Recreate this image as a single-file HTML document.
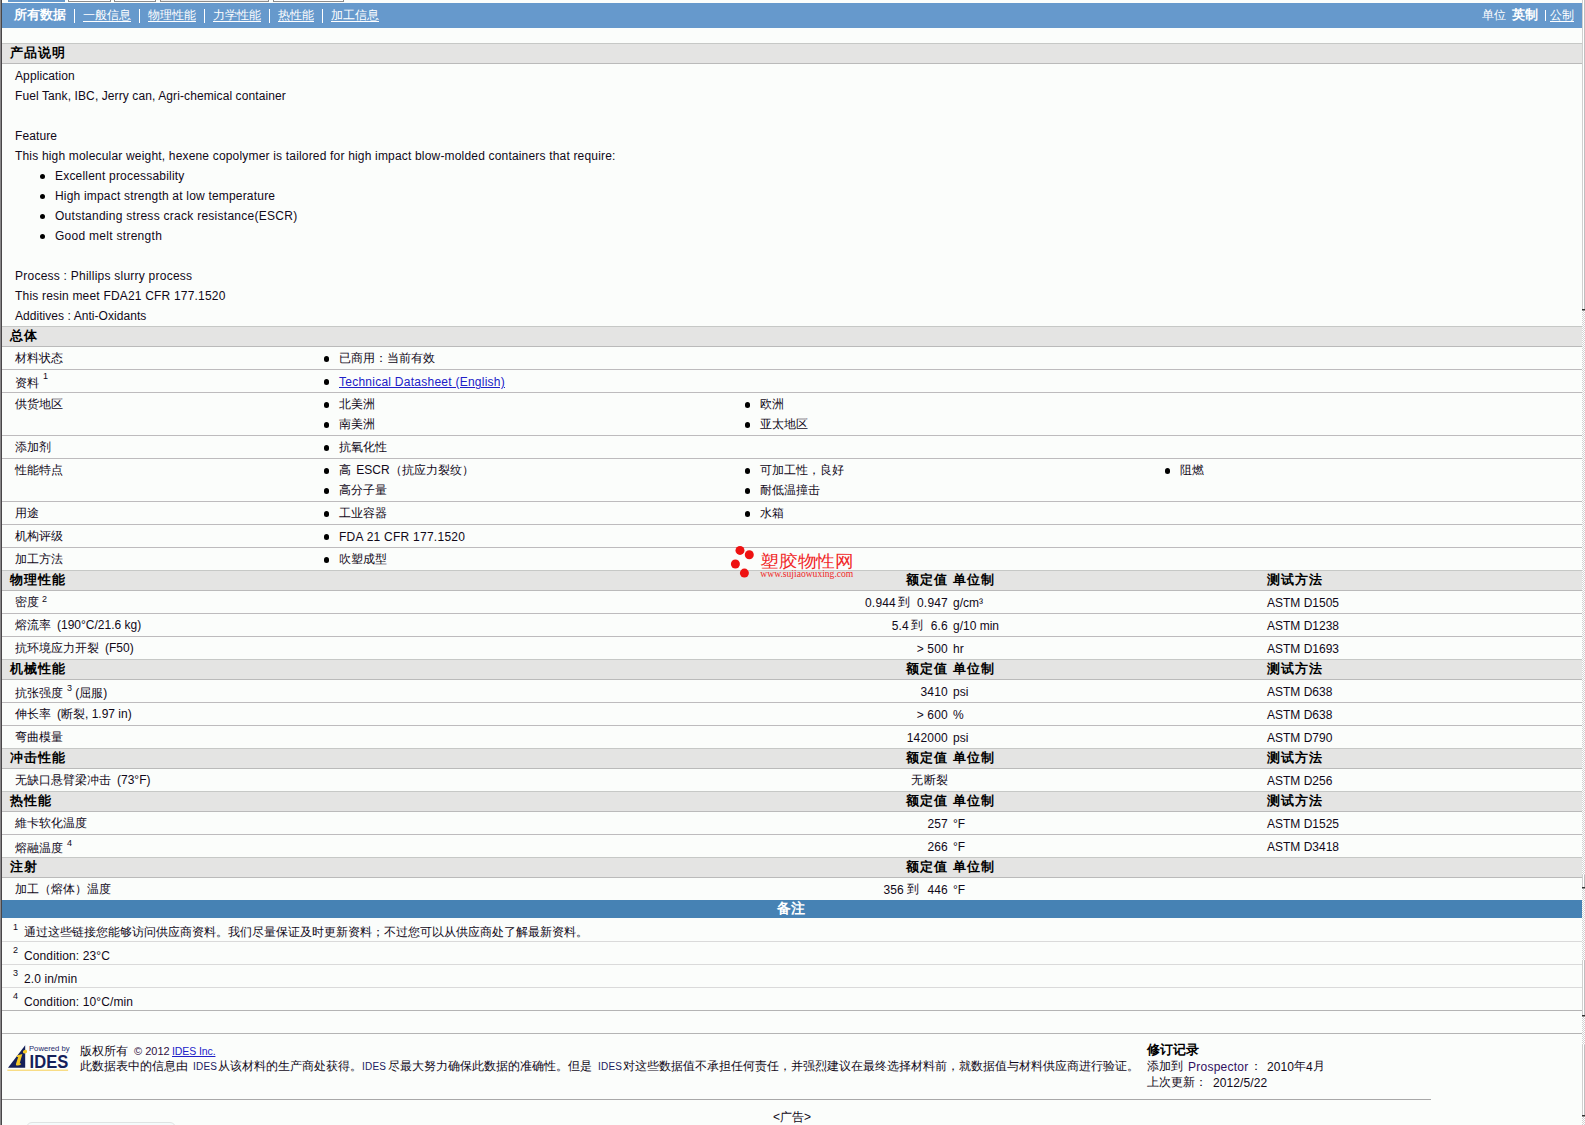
<!DOCTYPE html>
<html><head><meta charset="utf-8"><title>datasheet</title>
<style>
html,body{margin:0;padding:0;}
body{width:1585px;height:1125px;overflow:hidden;position:relative;background:#fbfdfb;font-family:"Liberation Sans",sans-serif;font-size:12px;color:#100818;}
.t{position:absolute;white-space:pre;}
</style></head><body>
<div style="position:absolute;left:0px;top:0px;width:1px;height:1125px;background:#898789;"></div>
<div style="position:absolute;left:1px;top:0px;width:1px;height:1125px;background:#484648;"></div>
<div style="position:absolute;left:1582px;top:0px;width:1px;height:309px;background:#cfcfcf;"></div>
<div style="position:absolute;left:1583px;top:0px;width:1px;height:309px;background:#ffffff;"></div>
<div style="position:absolute;left:1584px;top:0px;width:1px;height:309px;background:#bfbfbf;"></div>
<div style="position:absolute;left:1582px;top:875px;width:1px;height:12px;background:#cfcfcf;"></div>
<div style="position:absolute;left:1583px;top:875px;width:1px;height:12px;background:#ffffff;"></div>
<div style="position:absolute;left:1584px;top:875px;width:1px;height:12px;background:#bfbfbf;"></div>
<div style="position:absolute;left:1582px;top:960px;width:1px;height:55px;background:#cfcfcf;"></div>
<div style="position:absolute;left:1583px;top:960px;width:1px;height:55px;background:#ffffff;"></div>
<div style="position:absolute;left:1584px;top:960px;width:1px;height:55px;background:#bfbfbf;"></div>
<div style="position:absolute;left:1582px;top:1045px;width:1px;height:70px;background:#cfcfcf;"></div>
<div style="position:absolute;left:1583px;top:1045px;width:1px;height:70px;background:#ffffff;"></div>
<div style="position:absolute;left:1584px;top:1045px;width:1px;height:70px;background:#bfbfbf;"></div>
<div style="position:absolute;left:1582px;top:311px;width:3px;height:564px;background:repeating-conic-gradient(#d2d2d2 0 25%, #ffffff 0 50%) 0 0/2px 2px;"></div>
<div style="position:absolute;left:1582px;top:889px;width:3px;height:71px;background:repeating-conic-gradient(#d2d2d2 0 25%, #ffffff 0 50%) 0 0/2px 2px;"></div>
<div style="position:absolute;left:1582px;top:1017px;width:3px;height:28px;background:repeating-conic-gradient(#d2d2d2 0 25%, #ffffff 0 50%) 0 0/2px 2px;"></div>
<div style="position:absolute;left:1582px;top:1117px;width:3px;height:8px;background:repeating-conic-gradient(#d2d2d2 0 25%, #ffffff 0 50%) 0 0/2px 2px;"></div>
<div style="position:absolute;left:1582px;top:309px;width:3px;height:1px;background:#333333;"></div>
<div style="position:absolute;left:1582px;top:310px;width:3px;height:1px;background:#909090;"></div>
<div style="position:absolute;left:1582px;top:887px;width:3px;height:1px;background:#333333;"></div>
<div style="position:absolute;left:1582px;top:888px;width:3px;height:1px;background:#909090;"></div>
<div style="position:absolute;left:1582px;top:1015px;width:3px;height:1px;background:#333333;"></div>
<div style="position:absolute;left:1582px;top:1016px;width:3px;height:1px;background:#909090;"></div>
<div style="position:absolute;left:1582px;top:1115px;width:3px;height:1px;background:#333333;"></div>
<div style="position:absolute;left:1582px;top:1116px;width:3px;height:1px;background:#909090;"></div>
<div style="position:absolute;left:8px;top:0px;width:57px;height:2px;background:#6699cc;"></div>
<div style="position:absolute;left:68px;top:-2px;width:41px;height:2px;background:#ffffff;border:1px solid #8c8c8c;"></div>
<div style="position:absolute;left:114px;top:-2px;width:40px;height:2px;background:#ffffff;border:1px solid #8c8c8c;"></div>
<div style="position:absolute;left:160px;top:-2px;width:107px;height:2px;background:#eeeeee;border:1px solid #8c8c8c;"></div>
<div style="position:absolute;left:273px;top:-2px;width:69px;height:2px;background:#ffffff;border:1px solid #8c8c8c;"></div>
<div style="position:absolute;left:2px;top:3px;width:1580px;height:25px;background:#6699cc;"></div>
<div class="t" style="left:14px;top:8px;line-height:14px;font-size:13px;color:#ffffff;font-weight:bold;">所有数据</div>
<div style="position:absolute;left:74px;top:9px;width:1px;height:14px;background:#ffffff;"></div>
<div style="position:absolute;left:139px;top:9px;width:1px;height:14px;background:#ffffff;"></div>
<div style="position:absolute;left:204px;top:9px;width:1px;height:14px;background:#ffffff;"></div>
<div style="position:absolute;left:269px;top:9px;width:1px;height:14px;background:#ffffff;"></div>
<div style="position:absolute;left:322px;top:9px;width:1px;height:14px;background:#ffffff;"></div>
<div class="t" style="left:83px;top:8px;line-height:14px;font-size:12px;color:#ffffff;">一般信息</div>
<div style="position:absolute;left:83px;top:21px;width:48px;height:1px;background:#ffffff;"></div>
<div class="t" style="left:148px;top:8px;line-height:14px;font-size:12px;color:#ffffff;">物理性能</div>
<div style="position:absolute;left:148px;top:21px;width:48px;height:1px;background:#ffffff;"></div>
<div class="t" style="left:213px;top:8px;line-height:14px;font-size:12px;color:#ffffff;">力学性能</div>
<div style="position:absolute;left:213px;top:21px;width:48px;height:1px;background:#ffffff;"></div>
<div class="t" style="left:278px;top:8px;line-height:14px;font-size:12px;color:#ffffff;">热性能</div>
<div style="position:absolute;left:278px;top:21px;width:36px;height:1px;background:#ffffff;"></div>
<div class="t" style="left:331px;top:8px;line-height:14px;font-size:12px;color:#ffffff;">加工信息</div>
<div style="position:absolute;left:331px;top:21px;width:48px;height:1px;background:#ffffff;"></div>
<div class="t" style="left:1482px;top:8px;line-height:14px;font-size:12px;color:#ffffff;">单位</div>
<div class="t" style="left:1512px;top:8px;line-height:14px;font-size:13px;color:#ffffff;font-weight:bold;">英制</div>
<div style="position:absolute;left:1545px;top:10px;width:1px;height:11px;background:#ffffff;"></div>
<div class="t" style="left:1550px;top:8px;line-height:14px;font-size:12px;color:#ffffff;">公制</div>
<div style="position:absolute;left:1550px;top:21px;width:24px;height:1px;background:#ffffff;"></div>
<div style="position:absolute;left:2px;top:43px;width:1580px;height:1px;background:#c6c8c6;"></div>
<div style="position:absolute;left:2px;top:44px;width:1580px;height:19px;background:#e4e4e3;"></div>
<div style="position:absolute;left:2px;top:63px;width:1580px;height:1px;background:#bababa;"></div>
<div class="t" style="left:10px;top:46px;line-height:14px;font-size:13px;color:#000;font-weight:bold;letter-spacing:1px;">产品说明</div>
<div class="t" style="left:15px;top:69px;line-height:14px;font-size:12px;color:#100818;letter-spacing:0.1px;">Application</div>
<div class="t" style="left:15px;top:89px;line-height:14px;font-size:12px;color:#100818;letter-spacing:0.1px;">Fuel Tank, IBC, Jerry can, Agri-chemical container</div>
<div class="t" style="left:15px;top:129px;line-height:14px;font-size:12px;color:#100818;letter-spacing:0.1px;">Feature</div>
<div class="t" style="left:15px;top:149px;line-height:14px;font-size:12px;color:#100818;letter-spacing:0.18px;">This high molecular weight, hexene copolymer is tailored for high impact blow-molded containers that require:</div>
<div style="position:absolute;left:40.00px;top:173.80px;width:5.4px;height:5.4px;border-radius:50%;background:#000"></div>
<div class="t" style="left:55px;top:169px;line-height:14px;font-size:12px;color:#100818;letter-spacing:0.2px;">Excellent processability</div>
<div style="position:absolute;left:40.00px;top:193.80px;width:5.4px;height:5.4px;border-radius:50%;background:#000"></div>
<div class="t" style="left:55px;top:189px;line-height:14px;font-size:12px;color:#100818;letter-spacing:0.19px;">High impact strength at low temperature</div>
<div style="position:absolute;left:40.00px;top:213.80px;width:5.4px;height:5.4px;border-radius:50%;background:#000"></div>
<div class="t" style="left:55px;top:209px;line-height:14px;font-size:12px;color:#100818;letter-spacing:0.27px;">Outstanding stress crack resistance(ESCR)</div>
<div style="position:absolute;left:40.00px;top:233.80px;width:5.4px;height:5.4px;border-radius:50%;background:#000"></div>
<div class="t" style="left:55px;top:229px;line-height:14px;font-size:12px;color:#100818;letter-spacing:0.28px;">Good melt strength</div>
<div class="t" style="left:15px;top:269px;line-height:14px;font-size:12px;color:#100818;letter-spacing:0.24px;">Process : Phillips slurry process</div>
<div class="t" style="left:15px;top:289px;line-height:14px;font-size:12px;color:#100818;letter-spacing:0.19px;">This resin meet FDA21 CFR 177.1520</div>
<div class="t" style="left:15px;top:309px;line-height:14px;font-size:12px;color:#100818;letter-spacing:0.05px;">Additives : Anti-Oxidants</div>
<div style="position:absolute;left:2px;top:326px;width:1580px;height:1px;background:#c6c8c6;"></div>
<div style="position:absolute;left:2px;top:327px;width:1580px;height:19px;background:#e4e4e3;"></div>
<div style="position:absolute;left:2px;top:346px;width:1580px;height:1px;background:#bababa;"></div>
<div class="t" style="left:10px;top:329px;line-height:14px;font-size:13px;color:#000;font-weight:bold;letter-spacing:1px;">总体</div>
<div class="t" style="left:15px;top:351px;line-height:14px;font-size:12px;color:#100818;">材料状态</div>
<div style="position:absolute;left:324.00px;top:356.30px;width:5.4px;height:5.4px;border-radius:50%;background:#000"></div>
<div class="t" style="left:339px;top:351px;line-height:14px;font-size:12px;color:#100818;">已商用：当前有效</div>
<div style="position:absolute;left:2px;top:369px;width:1580px;height:1px;background:#bdbbbd;"></div>
<div class="t" style="left:15px;top:376px;line-height:14px;font-size:12px;color:#100818;">资料</div>
<div style="position:absolute;left:324.00px;top:379.30px;width:5.4px;height:5.4px;border-radius:50%;background:#000"></div>
<div class="t" style="left:339px;top:375px;line-height:14px;font-size:12px;color:#100818;letter-spacing:0.25px;"><span style="color:#2020c8;text-decoration:underline">Technical Datasheet (English)</span></div>
<div style="position:absolute;left:2px;top:392px;width:1580px;height:1px;background:#bdbbbd;"></div>
<div class="t" style="left:15px;top:397px;line-height:14px;font-size:12px;color:#100818;">供货地区</div>
<div style="position:absolute;left:324.00px;top:402.30px;width:5.4px;height:5.4px;border-radius:50%;background:#000"></div>
<div class="t" style="left:339px;top:397px;line-height:14px;font-size:12px;color:#100818;">北美洲</div>
<div style="position:absolute;left:324.00px;top:422.30px;width:5.4px;height:5.4px;border-radius:50%;background:#000"></div>
<div class="t" style="left:339px;top:417px;line-height:14px;font-size:12px;color:#100818;">南美洲</div>
<div style="position:absolute;left:745.00px;top:402.30px;width:5.4px;height:5.4px;border-radius:50%;background:#000"></div>
<div class="t" style="left:760px;top:397px;line-height:14px;font-size:12px;color:#100818;">欧洲</div>
<div style="position:absolute;left:745.00px;top:422.30px;width:5.4px;height:5.4px;border-radius:50%;background:#000"></div>
<div class="t" style="left:760px;top:417px;line-height:14px;font-size:12px;color:#100818;">亚太地区</div>
<div style="position:absolute;left:2px;top:435px;width:1580px;height:1px;background:#bdbbbd;"></div>
<div class="t" style="left:15px;top:440px;line-height:14px;font-size:12px;color:#100818;">添加剂</div>
<div style="position:absolute;left:324.00px;top:445.30px;width:5.4px;height:5.4px;border-radius:50%;background:#000"></div>
<div class="t" style="left:339px;top:440px;line-height:14px;font-size:12px;color:#100818;">抗氧化性</div>
<div style="position:absolute;left:2px;top:458px;width:1580px;height:1px;background:#bdbbbd;"></div>
<div class="t" style="left:15px;top:463px;line-height:14px;font-size:12px;color:#100818;">性能特点</div>
<div style="position:absolute;left:324.00px;top:468.30px;width:5.4px;height:5.4px;border-radius:50%;background:#000"></div>
<div class="t" style="left:339px;top:463px;line-height:14px;font-size:12px;color:#100818;">高 <span style="margin-left:2px">ESCR</span>（抗应力裂纹）</div>
<div style="position:absolute;left:324.00px;top:488.30px;width:5.4px;height:5.4px;border-radius:50%;background:#000"></div>
<div class="t" style="left:339px;top:483px;line-height:14px;font-size:12px;color:#100818;">高分子量</div>
<div style="position:absolute;left:745.00px;top:468.30px;width:5.4px;height:5.4px;border-radius:50%;background:#000"></div>
<div class="t" style="left:760px;top:463px;line-height:14px;font-size:12px;color:#100818;">可加工性，良好</div>
<div style="position:absolute;left:745.00px;top:488.30px;width:5.4px;height:5.4px;border-radius:50%;background:#000"></div>
<div class="t" style="left:760px;top:483px;line-height:14px;font-size:12px;color:#100818;">耐低温撞击</div>
<div style="position:absolute;left:1165.00px;top:468.30px;width:5.4px;height:5.4px;border-radius:50%;background:#000"></div>
<div class="t" style="left:1180px;top:463px;line-height:14px;font-size:12px;color:#100818;">阻燃</div>
<div style="position:absolute;left:2px;top:501px;width:1580px;height:1px;background:#bdbbbd;"></div>
<div class="t" style="left:15px;top:506px;line-height:14px;font-size:12px;color:#100818;">用途</div>
<div style="position:absolute;left:324.00px;top:511.30px;width:5.4px;height:5.4px;border-radius:50%;background:#000"></div>
<div class="t" style="left:339px;top:506px;line-height:14px;font-size:12px;color:#100818;">工业容器</div>
<div style="position:absolute;left:745.00px;top:511.30px;width:5.4px;height:5.4px;border-radius:50%;background:#000"></div>
<div class="t" style="left:760px;top:506px;line-height:14px;font-size:12px;color:#100818;">水箱</div>
<div style="position:absolute;left:2px;top:524px;width:1580px;height:1px;background:#bdbbbd;"></div>
<div class="t" style="left:15px;top:529px;line-height:14px;font-size:12px;color:#100818;">机构评级</div>
<div style="position:absolute;left:324.00px;top:534.30px;width:5.4px;height:5.4px;border-radius:50%;background:#000"></div>
<div class="t" style="left:339px;top:530px;line-height:14px;font-size:12px;color:#100818;letter-spacing:0.25px;">FDA 21 CFR 177.1520</div>
<div style="position:absolute;left:2px;top:547px;width:1580px;height:1px;background:#bdbbbd;"></div>
<div class="t" style="left:15px;top:552px;line-height:14px;font-size:12px;color:#100818;">加工方法</div>
<div style="position:absolute;left:324.00px;top:557.30px;width:5.4px;height:5.4px;border-radius:50%;background:#000"></div>
<div class="t" style="left:339px;top:552px;line-height:14px;font-size:12px;color:#100818;">吹塑成型</div>
<div class="t" style="left:43px;top:369px;line-height:14px;font-size:9px;color:#100818;">1</div>
<div style="position:absolute;left:2px;top:570px;width:1580px;height:1px;background:#c6c8c6;"></div>
<div style="position:absolute;left:2px;top:571px;width:1580px;height:19px;background:#e4e4e3;"></div>
<div style="position:absolute;left:2px;top:590px;width:1580px;height:1px;background:#bababa;"></div>
<div class="t" style="left:10px;top:573px;line-height:14px;font-size:13px;color:#000;font-weight:bold;letter-spacing:1px;">物理性能</div>
<div class="t" style="left:648px;width:300px;text-align:right;top:573px;line-height:14px;font-size:13px;color:#000;font-weight:bold;letter-spacing:1px;">额定值</div>
<div class="t" style="left:953px;top:573px;line-height:14px;font-size:13px;color:#000;font-weight:bold;letter-spacing:1px;">单位制</div>
<div class="t" style="left:1267px;top:573px;line-height:14px;font-size:13px;color:#000;font-weight:bold;letter-spacing:1px;">测试方法</div>
<div class="t" style="left:15px;top:595px;line-height:14px;font-size:12px;color:#100818;">密度</div>
<div class="t" style="left:42px;top:592px;line-height:14px;font-size:9px;color:#100818;">2</div>
<div class="t" style="left:596px;width:300px;text-align:right;top:596px;line-height:14px;font-size:12px;color:#100818;letter-spacing:0.2px;">0.944</div>
<div class="t" style="left:898px;top:595px;line-height:14px;font-size:12px;color:#100818;letter-spacing:0.2px;">到</div>
<div class="t" style="left:648px;width:300px;text-align:right;top:596px;line-height:14px;font-size:12px;color:#100818;letter-spacing:0.2px;">0.947</div>
<div class="t" style="left:953px;top:596px;line-height:14px;font-size:12px;color:#100818;">g/cm³</div>
<div class="t" style="left:1267px;top:596px;line-height:14px;font-size:12px;color:#100818;">ASTM D1505</div>
<div style="position:absolute;left:2px;top:613px;width:1580px;height:1px;background:#bdbbbd;"></div>
<div class="t" style="left:15px;top:618px;line-height:14px;font-size:12px;color:#100818;">熔流率<span style="margin-left:6px"></span>(190°C/21.6 kg)</div>
<div class="t" style="left:609px;width:300px;text-align:right;top:619px;line-height:14px;font-size:12px;color:#100818;letter-spacing:0.2px;">5.4</div>
<div class="t" style="left:911px;top:618px;line-height:14px;font-size:12px;color:#100818;letter-spacing:0.2px;">到</div>
<div class="t" style="left:648px;width:300px;text-align:right;top:619px;line-height:14px;font-size:12px;color:#100818;letter-spacing:0.2px;">6.6</div>
<div class="t" style="left:953px;top:619px;line-height:14px;font-size:12px;color:#100818;">g/10 min</div>
<div class="t" style="left:1267px;top:619px;line-height:14px;font-size:12px;color:#100818;">ASTM D1238</div>
<div style="position:absolute;left:2px;top:636px;width:1580px;height:1px;background:#bdbbbd;"></div>
<div class="t" style="left:15px;top:641px;line-height:14px;font-size:12px;color:#100818;">抗环境应力开裂<span style="margin-left:6px"></span>(F50)</div>
<div class="t" style="left:648px;width:300px;text-align:right;top:642px;line-height:14px;font-size:12px;color:#100818;letter-spacing:0.2px;">&gt; 500</div>
<div class="t" style="left:953px;top:642px;line-height:14px;font-size:12px;color:#100818;">hr</div>
<div class="t" style="left:1267px;top:642px;line-height:14px;font-size:12px;color:#100818;">ASTM D1693</div>
<div style="position:absolute;left:2px;top:659px;width:1580px;height:1px;background:#c6c8c6;"></div>
<div style="position:absolute;left:2px;top:660px;width:1580px;height:19px;background:#e4e4e3;"></div>
<div style="position:absolute;left:2px;top:679px;width:1580px;height:1px;background:#bababa;"></div>
<div class="t" style="left:10px;top:662px;line-height:14px;font-size:13px;color:#000;font-weight:bold;letter-spacing:1px;">机械性能</div>
<div class="t" style="left:648px;width:300px;text-align:right;top:662px;line-height:14px;font-size:13px;color:#000;font-weight:bold;letter-spacing:1px;">额定值</div>
<div class="t" style="left:953px;top:662px;line-height:14px;font-size:13px;color:#000;font-weight:bold;letter-spacing:1px;">单位制</div>
<div class="t" style="left:1267px;top:662px;line-height:14px;font-size:13px;color:#000;font-weight:bold;letter-spacing:1px;">测试方法</div>
<div class="t" style="left:15px;top:686px;line-height:14px;font-size:12px;color:#100818;">抗张强度<span style="position:relative;top:-6px;font-size:9px;margin-left:4px">3</span> (屈服)</div>
<div class="t" style="left:648px;width:300px;text-align:right;top:685px;line-height:14px;font-size:12px;color:#100818;letter-spacing:0.2px;">3410</div>
<div class="t" style="left:953px;top:685px;line-height:14px;font-size:12px;color:#100818;">psi</div>
<div class="t" style="left:1267px;top:685px;line-height:14px;font-size:12px;color:#100818;">ASTM D638</div>
<div style="position:absolute;left:2px;top:702px;width:1580px;height:1px;background:#bdbbbd;"></div>
<div class="t" style="left:15px;top:707px;line-height:14px;font-size:12px;color:#100818;">伸长率<span style="margin-left:6px"></span>(断裂, 1.97 in)</div>
<div class="t" style="left:648px;width:300px;text-align:right;top:708px;line-height:14px;font-size:12px;color:#100818;letter-spacing:0.2px;">&gt; 600</div>
<div class="t" style="left:953px;top:708px;line-height:14px;font-size:12px;color:#100818;">%</div>
<div class="t" style="left:1267px;top:708px;line-height:14px;font-size:12px;color:#100818;">ASTM D638</div>
<div style="position:absolute;left:2px;top:725px;width:1580px;height:1px;background:#bdbbbd;"></div>
<div class="t" style="left:15px;top:730px;line-height:14px;font-size:12px;color:#100818;">弯曲模量</div>
<div class="t" style="left:648px;width:300px;text-align:right;top:731px;line-height:14px;font-size:12px;color:#100818;letter-spacing:0.2px;">142000</div>
<div class="t" style="left:953px;top:731px;line-height:14px;font-size:12px;color:#100818;">psi</div>
<div class="t" style="left:1267px;top:731px;line-height:14px;font-size:12px;color:#100818;">ASTM D790</div>
<div style="position:absolute;left:2px;top:748px;width:1580px;height:1px;background:#c6c8c6;"></div>
<div style="position:absolute;left:2px;top:749px;width:1580px;height:19px;background:#e4e4e3;"></div>
<div style="position:absolute;left:2px;top:768px;width:1580px;height:1px;background:#bababa;"></div>
<div class="t" style="left:10px;top:751px;line-height:14px;font-size:13px;color:#000;font-weight:bold;letter-spacing:1px;">冲击性能</div>
<div class="t" style="left:648px;width:300px;text-align:right;top:751px;line-height:14px;font-size:13px;color:#000;font-weight:bold;letter-spacing:1px;">额定值</div>
<div class="t" style="left:953px;top:751px;line-height:14px;font-size:13px;color:#000;font-weight:bold;letter-spacing:1px;">单位制</div>
<div class="t" style="left:1267px;top:751px;line-height:14px;font-size:13px;color:#000;font-weight:bold;letter-spacing:1px;">测试方法</div>
<div class="t" style="left:15px;top:773px;line-height:14px;font-size:12px;color:#100818;">无缺口悬臂梁冲击<span style="margin-left:6px"></span>(73°F)</div>
<div class="t" style="left:648px;width:300px;text-align:right;top:773px;line-height:14px;font-size:12px;color:#100818;letter-spacing:0.2px;">无断裂</div>
<div class="t" style="left:1267px;top:774px;line-height:14px;font-size:12px;color:#100818;">ASTM D256</div>
<div style="position:absolute;left:2px;top:791px;width:1580px;height:1px;background:#c6c8c6;"></div>
<div style="position:absolute;left:2px;top:792px;width:1580px;height:19px;background:#e4e4e3;"></div>
<div style="position:absolute;left:2px;top:811px;width:1580px;height:1px;background:#bababa;"></div>
<div class="t" style="left:10px;top:794px;line-height:14px;font-size:13px;color:#000;font-weight:bold;letter-spacing:1px;">热性能</div>
<div class="t" style="left:648px;width:300px;text-align:right;top:794px;line-height:14px;font-size:13px;color:#000;font-weight:bold;letter-spacing:1px;">额定值</div>
<div class="t" style="left:953px;top:794px;line-height:14px;font-size:13px;color:#000;font-weight:bold;letter-spacing:1px;">单位制</div>
<div class="t" style="left:1267px;top:794px;line-height:14px;font-size:13px;color:#000;font-weight:bold;letter-spacing:1px;">测试方法</div>
<div class="t" style="left:15px;top:816px;line-height:14px;font-size:12px;color:#100818;">維卡软化温度</div>
<div class="t" style="left:648px;width:300px;text-align:right;top:817px;line-height:14px;font-size:12px;color:#100818;letter-spacing:0.2px;">257</div>
<div class="t" style="left:953px;top:817px;line-height:14px;font-size:12px;color:#100818;">°F</div>
<div class="t" style="left:1267px;top:817px;line-height:14px;font-size:12px;color:#100818;">ASTM D1525</div>
<div style="position:absolute;left:2px;top:834px;width:1580px;height:1px;background:#bdbbbd;"></div>
<div class="t" style="left:15px;top:841px;line-height:14px;font-size:12px;color:#100818;">熔融温度</div>
<div class="t" style="left:67px;top:836px;line-height:14px;font-size:9px;color:#100818;">4</div>
<div class="t" style="left:648px;width:300px;text-align:right;top:840px;line-height:14px;font-size:12px;color:#100818;letter-spacing:0.2px;">266</div>
<div class="t" style="left:953px;top:840px;line-height:14px;font-size:12px;color:#100818;">°F</div>
<div class="t" style="left:1267px;top:840px;line-height:14px;font-size:12px;color:#100818;">ASTM D3418</div>
<div style="position:absolute;left:2px;top:857px;width:1580px;height:1px;background:#c6c8c6;"></div>
<div style="position:absolute;left:2px;top:858px;width:1580px;height:19px;background:#e4e4e3;"></div>
<div style="position:absolute;left:2px;top:877px;width:1580px;height:1px;background:#bababa;"></div>
<div class="t" style="left:10px;top:860px;line-height:14px;font-size:13px;color:#000;font-weight:bold;letter-spacing:1px;">注射</div>
<div class="t" style="left:648px;width:300px;text-align:right;top:860px;line-height:14px;font-size:13px;color:#000;font-weight:bold;letter-spacing:1px;">额定值</div>
<div class="t" style="left:953px;top:860px;line-height:14px;font-size:13px;color:#000;font-weight:bold;letter-spacing:1px;">单位制</div>
<div class="t" style="left:15px;top:882px;line-height:14px;font-size:12px;color:#100818;">加工（熔体）温度</div>
<div class="t" style="left:604px;width:300px;text-align:right;top:883px;line-height:14px;font-size:12px;color:#100818;letter-spacing:0.2px;">356</div>
<div class="t" style="left:907px;top:882px;line-height:14px;font-size:12px;color:#100818;letter-spacing:0.2px;">到</div>
<div class="t" style="left:648px;width:300px;text-align:right;top:883px;line-height:14px;font-size:12px;color:#100818;letter-spacing:0.2px;">446</div>
<div class="t" style="left:953px;top:883px;line-height:14px;font-size:12px;color:#100818;">°F</div>
<div style="position:absolute;left:2px;top:900px;width:1580px;height:18px;background:#4682b4;"></div>
<div class="t" style="left:777px;top:901px;line-height:14px;font-size:14px;color:#ffffff;font-weight:bold;">备注</div>
<div class="t" style="left:13px;top:920px;line-height:14px;font-size:9px;color:#100818;">1</div>
<div class="t" style="left:24px;top:925px;line-height:14px;font-size:12px;color:#100818;">通过这些链接您能够访问供应商资料。我们尽量保证及时更新资料；不过您可以从供应商处了解最新资料。</div>
<div style="position:absolute;left:2px;top:941px;width:1580px;height:1px;background:#dadada;"></div>
<div class="t" style="left:13px;top:943px;line-height:14px;font-size:9px;color:#100818;">2</div>
<div class="t" style="left:24px;top:949px;line-height:14px;font-size:12px;color:#100818;letter-spacing:0.12px;">Condition: 23°C</div>
<div style="position:absolute;left:2px;top:964px;width:1580px;height:1px;background:#dadada;"></div>
<div class="t" style="left:13px;top:966px;line-height:14px;font-size:9px;color:#100818;">3</div>
<div class="t" style="left:24px;top:972px;line-height:14px;font-size:12px;color:#100818;letter-spacing:0.12px;">2.0 in/min</div>
<div style="position:absolute;left:2px;top:987px;width:1580px;height:1px;background:#dadada;"></div>
<div class="t" style="left:13px;top:989px;line-height:14px;font-size:9px;color:#100818;">4</div>
<div class="t" style="left:24px;top:995px;line-height:14px;font-size:12px;color:#100818;letter-spacing:0.12px;">Condition: 10°C/min</div>
<div style="position:absolute;left:2px;top:1010px;width:1580px;height:1px;background:#b4b4b4;"></div>
<div style="position:absolute;left:2px;top:1033px;width:1580px;height:1px;background:#b4b4b4;"></div>
<div class="t" style="left:80px;top:1044px;line-height:14px;font-size:12px;color:#100818;">版权所有</div>
<div class="t" style="left:134px;top:1044px;line-height:14px;font-size:11px;color:#301040;">© 2012</div>
<div class="t" style="left:172px;top:1044px;line-height:14px;font-size:10.5px;color:#100818;letter-spacing:-0.1px;"><span style="color:#2020c8;text-decoration:underline">IDES Inc.</span></div>
<div class="t" style="left:80px;top:1059px;line-height:14px;font-size:12px;color:#100818;">此数据表中的信息由</div>
<div class="t" style="left:193px;top:1060px;line-height:14px;font-size:10px;color:#202060;letter-spacing:0.2px;">IDES</div>
<div class="t" style="left:218px;top:1059px;line-height:14px;font-size:12px;color:#100818;">从该材料的生产商处获得。</div>
<div class="t" style="left:362px;top:1060px;line-height:14px;font-size:10px;color:#202060;letter-spacing:0.2px;">IDES</div>
<div class="t" style="left:388px;top:1059px;line-height:14px;font-size:12px;color:#100818;">尽最大努力确保此数据的准确性。但是</div>
<div class="t" style="left:598px;top:1060px;line-height:14px;font-size:10px;color:#202060;letter-spacing:0.2px;">IDES</div>
<div class="t" style="left:623px;top:1059px;line-height:14px;font-size:12px;color:#100818;">对这些数据值不承担任何责任，并强烈建议在最终选择材料前，就数据值与材料供应商进行验证。</div>
<div class="t" style="left:1147px;top:1043px;line-height:14px;font-size:13px;color:#000;font-weight:bold;">修订记录</div>
<div class="t" style="left:1147px;top:1059px;line-height:14px;font-size:12px;color:#100818;">添加到</div>
<div class="t" style="left:1188px;top:1060px;line-height:14px;font-size:12px;color:#301060;letter-spacing:0.25px;">Prospector</div>
<div class="t" style="left:1250px;top:1059px;line-height:14px;font-size:12px;color:#100818;">：</div>
<div class="t" style="left:1267px;top:1060px;line-height:14px;font-size:12px;color:#100818;letter-spacing:0.1px;">2010</div>
<div class="t" style="left:1294px;top:1059px;line-height:14px;font-size:12px;color:#100818;">年</div>
<div class="t" style="left:1306px;top:1060px;line-height:14px;font-size:12px;color:#100818;letter-spacing:0.1px;">4</div>
<div class="t" style="left:1313px;top:1059px;line-height:14px;font-size:12px;color:#100818;">月</div>
<div class="t" style="left:1147px;top:1075px;line-height:14px;font-size:12px;color:#100818;">上次更新：</div>
<div class="t" style="left:1213px;top:1076px;line-height:14px;font-size:12px;color:#100818;letter-spacing:0.1px;">2012/5/22</div>
<div style="position:absolute;left:2px;top:1099px;width:1429px;height:1px;background:#a8a8a8;"></div>
<div class="t" style="left:773px;top:1110px;line-height:14px;font-size:12px;color:#100818;">&lt;广告&gt;</div>
<svg style="position:absolute;left:0px;top:1040px" width="80" height="35" viewBox="0 0 80 35">
<polygon points="8,27.8 25.2,5.2 25.2,27.8" fill="#14205a"/>
<path d="M16.8,15.6 L22.4,14.0 L19.8,23.0 Q19.6,24.0 20.9,23.3 L21.2,24.3 Q18.8,26.0 16.6,25.5 Q15.5,25.1 16.1,23.4 L18.2,16.9 L16.9,17.0 Z" fill="#f4c828"/>
<ellipse cx="25.0" cy="11.7" rx="2.2" ry="1.7" fill="#f4c828" transform="rotate(-20 25 11.7)"/>
<text x="29" y="10.9" font-family="Liberation Sans" font-size="7.6" fill="#1e2a6a" textLength="40.5" lengthAdjust="spacingAndGlyphs">Powered by</text>
<text x="29.6" y="27.8" font-family="Liberation Sans" font-size="19.2" font-weight="bold" fill="#14205a" textLength="38.6" lengthAdjust="spacingAndGlyphs">IDES</text>
<rect x="7.3" y="29.6" width="60.8" height="1.3" fill="#f8da78"/>
</svg>
<svg style="position:absolute;left:725px;top:540px" width="140" height="42" viewBox="0 0 140 42">
<circle cx="15" cy="10.4" r="4.5" fill="#ee1111"/>
<circle cx="24.3" cy="14.8" r="4.5" fill="#ee1111"/>
<circle cx="10.4" cy="24" r="4.5" fill="#ee1111"/>
<circle cx="19.4" cy="33.1" r="4.5" fill="#ee1111"/>
<text x="35.4" y="26.6" font-family="Liberation Sans" font-size="16.5" font-weight="300" fill="#f02828" textLength="93.5" lengthAdjust="spacingAndGlyphs">塑胶物性网</text>
<text x="35.3" y="37.2" font-family="Liberation Serif" font-size="9.6" fill="#f02828" textLength="93" lengthAdjust="spacingAndGlyphs">www.sujiaowuxing.com</text>
</svg>
<div style="position:absolute;left:26px;top:1122px;width:148px;height:20px;border:1px solid #dfe3e3;border-radius:6px;background:#f5fbfb"></div>
</body></html>
